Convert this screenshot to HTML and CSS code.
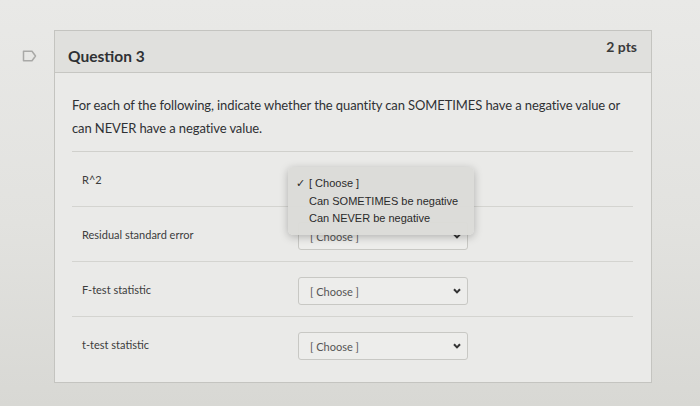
FILE: index.html
```html
<!DOCTYPE html>
<html lang="en">
<head>
    <meta charset="UTF-8">
    <meta name="viewport" content="width=device-width, initial-scale=1.0">
    <title>Question 3</title>
    <link rel="stylesheet" href="styles.css">
</head>
<body>
    <div class="page">
        <div class="flag">
            <svg width="15" height="12" viewBox="0 0 15 12">
                <path d="M1.5 1.2 H10 L13.5 6 L10 10.8 H1.5 Z" fill="none" stroke="#a9a9a7" stroke-width="1.5" stroke-linejoin="round"/>
            </svg>
        </div>
        <div class="question">
            <div class="question-header">
                <span class="title">Question 3</span>
                <span class="points">2 pts</span>
            </div>
            <div class="question-body">
                <p class="prompt">For each of the following, indicate whether the quantity can SOMETIMES have a negative value or can NEVER have a negative value.</p>
                <div class="answers">
                    <div class="answer-row">
                        <span class="label">R^2</span>
                        <div class="select-wrap">
                            <!-- open menu for the first select -->
                            <ul class="menu">
                                <li class="checked">[ Choose ]</li>
                                <li>Can SOMETIMES be negative</li>
                                <li>Can NEVER be negative</li>
                            </ul>
                        </div>
                    </div>
                    <div class="answer-row">
                        <span class="label">Residual standard error</span>
                        <div class="select">
                            <span>[ Choose ]</span>
                            <svg class="chevron" width="8" height="6" viewBox="0 0 8 6"><path d="M1 1.2 L4 4.4 L7 1.2" fill="none" stroke="#333" stroke-width="2"/></svg>
                        </div>
                    </div>
                    <div class="answer-row">
                        <span class="label">F-test statistic</span>
                        <div class="select">
                            <span>[ Choose ]</span>
                            <svg class="chevron" width="8" height="6" viewBox="0 0 8 6"><path d="M1 1.2 L4 4.4 L7 1.2" fill="none" stroke="#333" stroke-width="2"/></svg>
                        </div>
                    </div>
                    <div class="answer-row">
                        <span class="label">t-test statistic</span>
                        <div class="select">
                            <span>[ Choose ]</span>
                            <svg class="chevron" width="8" height="6" viewBox="0 0 8 6"><path d="M1 1.2 L4 4.4 L7 1.2" fill="none" stroke="#333" stroke-width="2"/></svg>
                        </div>
                    </div>
                </div>
            </div>
        </div>
    </div>
</body>
</html>
```

FILE: styles.css
```css
body {
    margin: 0;
    font-family: Lato, "Open Sans", sans-serif;
    color: #2f3134;
    background: linear-gradient(180deg, #e9e9e7 0%, #e2e2df 55%, #d8d8d4 100%);
    height: 406px;
    overflow: hidden;
}
.page {
    display: flex;
    align-items: flex-start;
    padding: 30px 0 0 22px;
}
.flag {
    width: 32px;
    padding-top: 16px;
}
.question {
    width: 598px;
    height: 353px;
    border: 1px solid #c4c4c0;
    background-color: #eaeae8;
    box-sizing: border-box;
}
.question-header {
    height: 41px;
    display: flex;
    justify-content: space-between;
    align-items: center;
    padding: 0 14px 0 13px;
    background-color: #e0e0dd;
    border-bottom: 1px solid #c6c6c2;
}
.title {
    font-size: 15.5px;
    font-weight: bold;
    padding-top: 8px;
}
.points {
    font-size: 14px;
    font-weight: bold;
    color: #3a3a3a;
    padding-bottom: 10px;
}
.question-body {
    padding: 21px 18px 0 17px;
}
.prompt {
    margin: 0;
    font-size: 13px;
    line-height: 23px;
    letter-spacing: -0.1px;
}
.answers {
    margin-top: 11px;
    border-top: 1px solid #d0d0cc;
}
.answer-row {
    height: 54px;
    display: flex;
    align-items: center;
    border-bottom: 1px solid #d4d4d0;
}
.answer-row:last-child {
    border-bottom: none;
}
.label {
    width: 216px;
    padding-left: 10px;
    font-size: 11px;
    color: #3c3c3c;
}
.select-wrap {
    position: relative;
    width: 170px;
    height: 28px;
}
.select {
    width: 170px;
    height: 28px;
    box-sizing: border-box;
    border: 1px solid #c8c8c4;
    border-radius: 3px;
    background-color: #ededeb;
    display: flex;
    align-items: center;
    justify-content: space-between;
    padding: 0 6px 0 11px;
    font-size: 11px;
    color: #555;
    margin-top: 4px;
}
.menu {
    position: absolute;
    left: -10px;
    top: 2px;
    width: 186px;
    margin: 0;
    padding: 8px 0 7px;
    list-style: none;
    background-color: rgba(219, 219, 216, 0.97);
    border-radius: 5px;
    box-shadow: 0 2px 8px rgba(0, 0, 0, 0.25);
    font-family: "Liberation Sans", Arial, sans-serif;
    font-size: 11px;
    color: #2a2a2a;
    z-index: 2;
}
.menu li {
    height: 17.5px;
    line-height: 17.5px;
    padding-left: 21px;
    position: relative;
}
.menu .checked::before {
    content: "\2713";
    position: absolute;
    left: 8px;
    font-size: 11px;
}
```
